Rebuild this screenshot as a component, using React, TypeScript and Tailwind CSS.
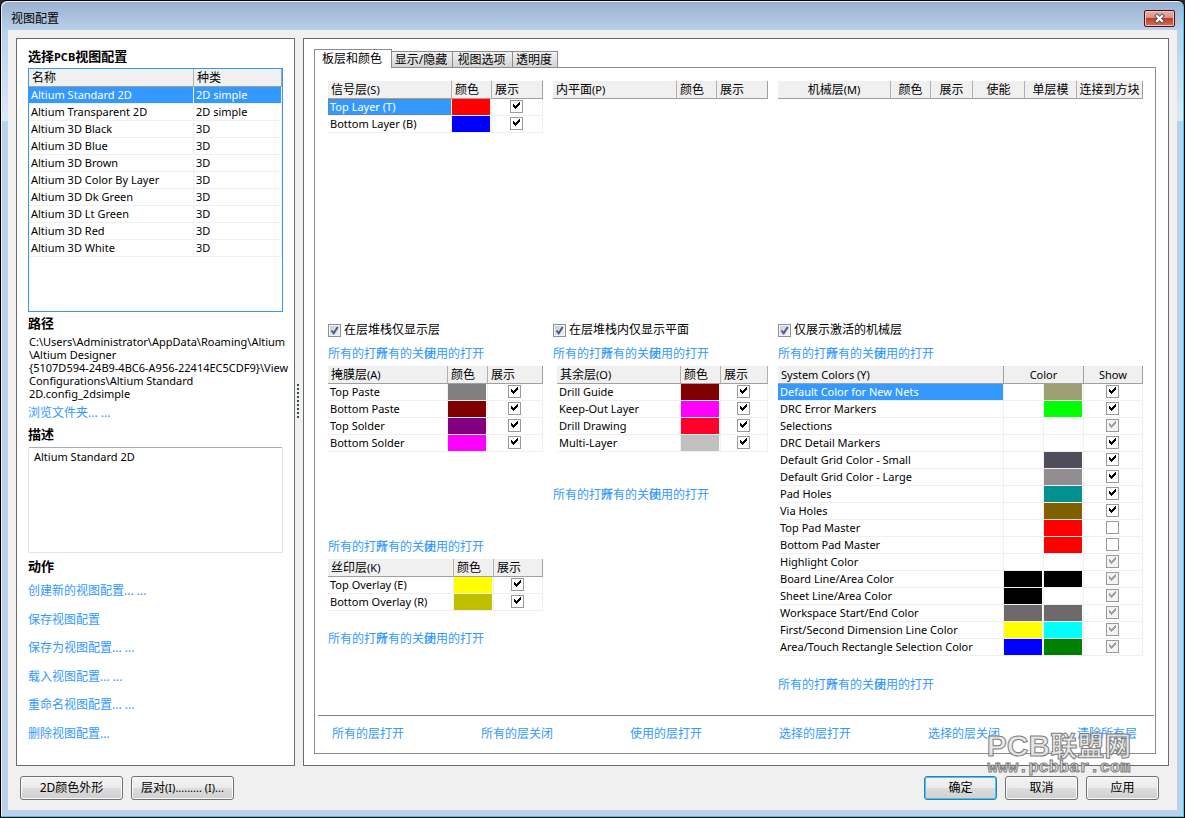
import React from 'react'

interface LayerRow {
  name: string
  color: string
}

interface SystemRow {
  name: string
  first?: string
  second?: string
  state: 'on' | 'off' | 'locked'
}

const CONFIGS = [
  ['Altium Standard 2D', '2D simple'],
  ['Altium Transparent 2D', '2D simple'],
  ['Altium 3D Black', '3D'],
  ['Altium 3D Blue', '3D'],
  ['Altium 3D Brown', '3D'],
  ['Altium 3D Color By Layer', '3D'],
  ['Altium 3D Dk Green', '3D'],
  ['Altium 3D Lt Green', '3D'],
  ['Altium 3D Red', '3D'],
  ['Altium 3D White', '3D'],
]

const ACTIONS = [
  '创建新的视图配置... ...',
  '保存视图配置',
  '保存为视图配置... ...',
  '载入视图配置... ...',
  '重命名视图配置... ...',
  '删除视图配置...',
]

const SIGNAL: LayerRow[] = [
  { name: 'Top Layer (T)', color: 'bg-[#ff0000]' },
  { name: 'Bottom Layer (B)', color: 'bg-[#0000ff]' },
]

const MASK: LayerRow[] = [
  { name: 'Top Paste', color: 'bg-[#808080]' },
  { name: 'Bottom Paste', color: 'bg-[#800000]' },
  { name: 'Top Solder', color: 'bg-[#800080]' },
  { name: 'Bottom Solder', color: 'bg-[#ff00ff]' },
]

const OTHER: LayerRow[] = [
  { name: 'Drill Guide', color: 'bg-[#800000]' },
  { name: 'Keep-Out Layer', color: 'bg-[#ff00ff]' },
  { name: 'Drill Drawing', color: 'bg-[#ff002a]' },
  { name: 'Multi-Layer', color: 'bg-[#c0c0c0]' },
]

const SILK: LayerRow[] = [
  { name: 'Top Overlay (E)', color: 'bg-[#ffff00]' },
  { name: 'Bottom Overlay (R)', color: 'bg-[#c0c000]' },
]

const SYSTEM: SystemRow[] = [
  { name: 'Default Color for New Nets', second: 'bg-[#9f9f76]', state: 'on' },
  { name: 'DRC Error Markers', second: 'bg-[#00ff00]', state: 'on' },
  { name: 'Selections', second: 'bg-white', state: 'locked' },
  { name: 'DRC Detail Markers', second: 'bg-white', state: 'on' },
  { name: 'Default Grid Color - Small', second: 'bg-[#4d4d5c]', state: 'on' },
  { name: 'Default Grid Color - Large', second: 'bg-[#918d90]', state: 'on' },
  { name: 'Pad Holes', second: 'bg-[#009190]', state: 'on' },
  { name: 'Via Holes', second: 'bg-[#7f6000]', state: 'on' },
  { name: 'Top Pad Master', second: 'bg-[#ff0000]', state: 'off' },
  { name: 'Bottom Pad Master', second: 'bg-[#ff0000]', state: 'off' },
  { name: 'Highlight Color', second: 'bg-white', state: 'locked' },
  { name: 'Board Line/Area Color', first: 'bg-black', second: 'bg-black', state: 'locked' },
  { name: 'Sheet Line/Area Color', first: 'bg-black', second: 'bg-white', state: 'locked' },
  { name: 'Workspace Start/End Color', first: 'bg-[#6e6a69]', second: 'bg-[#6e6a69]', state: 'locked' },
  { name: 'First/Second Dimension Line Color', first: 'bg-[#ffff00]', second: 'bg-[#00ffff]', state: 'locked' },
  { name: 'Area/Touch Rectangle Selection Color', first: 'bg-[#0000ff]', second: 'bg-[#008000]', state: 'locked' },
]

const ALL_LAYERS = ['所有的层打开', '所有的层关闭', '使用的层打开', '选择的层打开', '选择的层关闭', '清除所有层']

function Link({ children }: { children: React.ReactNode }) {
  return (
    <a href="#" className="block h-4 whitespace-nowrap text-xs leading-4 text-[#3399ff]">
      {children}
    </a>
  )
}

// Slots are narrower than the labels, so neighbours run into each other
function LayerLinks() {
  return (
    <div className="flex">
      {['所有的打开', '所有的关闭', '使用的打开'].map(t => (
        <div key={t} className="w-12 shrink-0"><Link>{t}</Link></div>
      ))}
    </div>
  )
}

function GridCheck({ label, checked = true, disabled = false }: { label: string; checked?: boolean; disabled?: boolean }) {
  return (
    <span className="relative mx-auto block size-[13px]">
      <input
        type="checkbox"
        aria-label={label}
        defaultChecked={checked}
        disabled={disabled}
        className={`peer block size-[13px] appearance-none border border-[#999999] ${disabled ? 'bg-[#f3f3f3]' : 'bg-white'}`}
      />
      <svg
        viewBox="0 0 13 13"
        shapeRendering="crispEdges"
        className={`pointer-events-none absolute inset-0 hidden size-[13px] peer-checked:block ${disabled ? 'text-[#a0a0a0]' : 'text-black'}`}
      >
        <path
          fill="currentColor"
          d="M3 4h1v3h-1z M4 5h1v3h-1z M5 6h1v3h-1z M6 5h1v3h-1z M7 4h1v3h-1z M8 3h1v3h-1z M9 2h1v3h-1z"
        />
      </svg>
    </span>
  )
}

function OptionCheck({ id, children }: { id: string; children: React.ReactNode }) {
  return (
    <div className="flex h-4 items-center gap-[3px]">
      <span className="relative block size-[13px] shrink-0">
        <input
          id={id}
          type="checkbox"
          defaultChecked
          className="peer block size-[13px] appearance-none border border-[#8e8f8f] bg-linear-to-br from-[#c3c9d2] to-[#f6f6f6] shadow-[inset_0_0_0_1px_#f4f4f4]"
        />
        <svg viewBox="0 0 13 13" className="pointer-events-none absolute inset-0 hidden size-[13px] peer-checked:block">
          <path d="M3.5 6.5L5.7 9.3L9.7 3" fill="none" stroke="#42578f" strokeWidth="1.9" />
        </svg>
      </span>
      <label htmlFor={id} className="whitespace-nowrap text-xs leading-4">{children}</label>
    </div>
  )
}

function Title({ text, hotkey }: { text: string; hotkey: string }) {
  return <>{text}<span className="text-[11px]">({hotkey})</span></>
}

function Head({ children, last = false, center = false, span = 1 }: {
  children: React.ReactNode
  last?: boolean
  center?: boolean
  span?: number
}) {
  return (
    <th
      colSpan={span}
      className={`h-[18px] overflow-hidden whitespace-nowrap border-b border-r border-b-[#a0a0a0] bg-[#f0f0f0] p-0 text-xs leading-4 font-normal ${
        last ? 'border-r-[#a0a0a0]' : 'border-r-[#b0b0b0]'
      } ${center ? 'text-center' : 'pl-[3px] text-left'}`}
    >
      {children}
    </th>
  )
}

const CELL = 'h-[17px] overflow-hidden whitespace-nowrap border-b border-r border-[#f0f0f0] p-0 text-[11px] leading-4'
const CHECK_CELL = 'h-[17px] border-b border-r border-[#f0f0f0] p-0 pt-px pr-[2px] align-top'

function Swatch({ color }: { color?: string }) {
  return (
    <td className={CELL}>
      <div className={`mr-px h-4 ${color ?? ''}`} />
    </td>
  )
}

function LayerTable({ title, hotkey, rows, showCol, selected, openEnd = false }: {
  title: string
  hotkey: string
  rows: LayerRow[]
  showCol: string
  selected?: string
  openEnd?: boolean
}) {
  return (
    <table className="w-full table-fixed border-separate border-spacing-0">
      <colgroup>
        <col />
        <col className="w-10" />
        <col className={showCol} />
      </colgroup>
      <thead>
        <tr>
          <Head><Title text={title} hotkey={hotkey} /></Head>
          <Head>颜色</Head>
          <Head last={!openEnd}>展示</Head>
        </tr>
      </thead>
      <tbody>
        {rows.map(row => (
          <tr key={row.name}>
            <td className={CELL}>
              <div
                className={`h-4 pl-[2px] ${
                  row.name === selected ? 'bg-[#3399ff] text-white outline-1 -outline-offset-1 outline-dotted outline-[#cc6600]/70' : ''
                }`}
              >
                {row.name}
              </div>
            </td>
            <Swatch color={row.color} />
            <td className={CHECK_CELL}><GridCheck label={row.name} /></td>
          </tr>
        ))}
      </tbody>
    </table>
  )
}

function MechanicalTable() {
  return (
    <table className="w-full table-fixed border-separate border-spacing-0">
      <colgroup>
        <col />
        <col className="w-10" />
        <col className="w-[42px]" />
        <col className="w-[52px]" />
        <col className="w-[52px]" />
        <col className="w-[66px]" />
      </colgroup>
      <thead>
        <tr>
          <Head center><Title text="机械层" hotkey="M" /></Head>
          <Head center>颜色</Head>
          <Head center>展示</Head>
          <Head center>使能</Head>
          <Head center>单层模</Head>
          <Head center last>连接到方块</Head>
        </tr>
      </thead>
    </table>
  )
}

function SystemTable() {
  return (
    <table className="w-full table-fixed border-separate border-spacing-0">
      <colgroup>
        <col />
        <col className="w-10" />
        <col className="w-10" />
        <col className="w-[59px]" />
      </colgroup>
      <thead>
        <tr>
          <Head last><span className="text-[11px]">System Colors (Y)</span></Head>
          <Head last center span={2}><span className="text-[11px]">Color</span></Head>
          <Head last center><span className="text-[11px]">Show</span></Head>
        </tr>
      </thead>
      <tbody>
        {SYSTEM.map((row, i) => (
          <tr key={row.name}>
            <td className={CELL}>
              <div className={`h-4 pl-[2px] ${i === 0 ? 'bg-[#3399ff] text-white' : ''}`}>{row.name}</div>
            </td>
            <Swatch color={row.first} />
            <Swatch color={row.second} />
            <td className={CHECK_CELL}>
              <GridCheck label={row.name} checked={row.state !== 'off'} disabled={row.state === 'locked'} />
            </td>
          </tr>
        ))}
      </tbody>
    </table>
  )
}

function PushButton({ children, wide = false, primary = false }: {
  children: React.ReactNode
  wide?: boolean
  primary?: boolean
}) {
  return (
    <button
      type="button"
      className={`h-6 rounded-[3px] border bg-[linear-gradient(#f3f3f3,#ebebeb_50%,#dddddd_50%,#cfcfcf)] text-xs leading-4 ${
        wide ? 'w-[103px]' : 'w-[73px]'
      } ${
        primary
          ? 'border-[#2f7fb5] shadow-[inset_0_0_0_1px_#42c7f2]'
          : 'border-[#707070] shadow-[inset_0_0_0_1px_#fbfbfb]'
      }`}
    >
      {children}
    </button>
  )
}

function Heading({ children }: { children: React.ReactNode }) {
  return <h2 className="h-[18px] whitespace-nowrap text-[13px] leading-[18px] font-bold">{children}</h2>
}

function ConfigPanel() {
  return (
    <aside className="flex w-[279px] shrink-0 flex-col border border-[#6b6b6b] bg-white px-[11px] pt-2 pb-[23px]">
      <Heading>选择<span className="text-[11px]">PCB</span>视图配置</Heading>
      <div className="mt-[3px] h-[244px] border border-[#3399ff]">
        <table className="w-full table-fixed border-separate border-spacing-0">
          <colgroup>
            <col className="w-[165px]" />
            <col />
          </colgroup>
          <thead>
            <tr>
              <Head>名称</Head>
              <Head last>种类</Head>
            </tr>
          </thead>
          <tbody>
            {CONFIGS.map(([name, kind], i) => (
              <tr key={name} className={i === 0 ? 'bg-[#3399ff] text-white' : ''}>
                <td className={`${CELL} pl-[2px]`}>{name}</td>
                <td className={`${CELL} pl-[2px]`}>{kind}</td>
              </tr>
            ))}
          </tbody>
        </table>
      </div>

      <div className="mt-[2px]"><Heading>路径</Heading></div>
      <p className="mt-[3px] pl-px text-[11px] leading-[13px] whitespace-nowrap">
        C:\Users\Administrator\AppData\Roaming\Altium<br />
        \Altium Designer<br />
        {'{5107D594-24B9-4BC6-A956-22414EC5CDF9}\\View'}<br />
        Configurations\Altium Standard<br />
        2D.config_2dsimple
      </p>
      <div className="mt-[5px]"><Link>浏览文件夹... ...</Link></div>

      <div className="mt-1"><Heading><label htmlFor="description">描述</label></Heading></div>
      <textarea
        id="description"
        defaultValue="Altium Standard 2D"
        className="mt-1 block h-[106px] w-full resize-none rounded-[2px] border border-[#e2e3ea] border-t-[#abadb3] px-[5px] py-px text-[11px] leading-4"
      />

      <div className="mt-1"><Heading>动作</Heading></div>
      <nav className="mt-2 flex flex-1 flex-col justify-between">
        {ACTIONS.map(a => <Link key={a}>{a}</Link>)}
      </nav>
    </aside>
  )
}

function Splitter() {
  return (
    <div className="flex w-2 shrink-0 flex-col items-start justify-center gap-[2px] pb-[2px] pl-[2px]">
      {Array.from({ length: 9 }, (_, i) => (
        <div key={i} className="size-[2px] bg-[#2f4f4f]" />
      ))}
    </div>
  )
}

function Tabs() {
  return (
    <div role="tablist" className="flex items-end pr-3 text-xs leading-4">
      <button role="tab" aria-selected className="relative z-10 -mb-px h-[19px] w-[78px] border border-b-0 border-[#898c95] bg-white pr-[2px]">
        板层和颜色
      </button>
      {[
        ['显示/隐藏', 'w-[61px]'],
        ['视图选项', 'w-[60px]'],
        ['透明度', 'w-[45px]'],
      ].map(([t, w]) => (
        <button
          key={t}
          role="tab"
          className={`h-4 border border-b-0 border-l-0 border-[#898c95] bg-linear-to-b from-[#f2f2f2] to-[#d4d4d4] pr-[2px] whitespace-nowrap leading-[14px] ${w}`}
        >
          {t}
        </button>
      ))}
    </div>
  )
}

function Watermark() {
  return (
    <div className="pointer-events-none absolute right-[52px] bottom-[40px] w-[146px] text-center font-bold text-[#e2e4e4] opacity-85 [-webkit-text-stroke:1px_#6a6a6a]">
      <div className="flex h-[27px] items-center justify-center whitespace-nowrap">
        <span className="font-['Liberation_Sans',sans-serif] text-[30px] leading-[30px]">PCB</span>
        <span className="text-[27px] leading-[30px]">联盟网</span>
      </div>
      <div className="flex h-[18px] justify-center font-['Liberation_Mono',monospace] text-[17px] leading-[18px]">www.pcbbar.com</div>
    </div>
  )
}

export default function App() {
  return (
    <div className="bg-[#2b2b2b] font-['Noto_Sans','Noto_Sans_CJK_SC',sans-serif] text-black">
      <div className="relative flex min-h-screen flex-col rounded-t-[7px] border border-black bg-[linear-gradient(#98b1d0,#b9d1ea_30px,#dde8f5_120px,#b9d1ea_120px)] px-[7px] pb-[7px] shadow-[inset_-1px_-1px_0_#2fd0ee,inset_1px_1px_0_#e8f1fa]">
        <header className="flex h-[29px] shrink-0 items-center justify-between pt-[6px] pr-[2px] pl-[3px] text-xs leading-4">
          <h1>视图配置</h1>
          <button
            type="button"
            aria-label="关闭"
            className="flex h-[17px] w-[31px] items-center justify-center rounded-[2px] border border-[#4a1020] bg-[linear-gradient(#e8b0a6,#dc8f82_45%,#bf3d22_50%,#d5705c)] shadow-[inset_0_0_0_1px_#efc2ba]"
          >
            <svg viewBox="0 0 13 11" className="h-[11px] w-[13px]">
              <path d="M4 3L9 8M9 3L4 8" stroke="#4b5563" strokeWidth="4" strokeLinecap="square" />
              <path d="M4 3L9 8M9 3L4 8" stroke="#ffffff" strokeWidth="2.2" strokeLinecap="square" />
            </svg>
          </button>
        </header>

        <main className="flex flex-1 flex-col bg-[#f0f0f0] pt-2 pb-[10px]">
          <div className="flex flex-1 px-2">
            <ConfigPanel />
            <Splitter />
            <section className="flex min-w-0 flex-1 flex-col border border-[#6b6b6b] bg-white pt-[10px] pr-3 pb-[11px] pl-[10px]">
              <Tabs />
              <div className="flex flex-1 flex-col border border-[#898c95]">
                <div className="grid flex-1 grid-cols-[215fr_215fr_365fr] gap-[10px] pt-[13px] pr-3 pl-[13px]">
                  <div>
                    <div className="h-[241px]">
                      <LayerTable title="信号层" hotkey="S" rows={SIGNAL} showCol="w-[51px]" selected="Top Layer (T)" />
                    </div>
                    <OptionCheck id="stack-layers">在层堆栈仅显示层</OptionCheck>
                    <div className="mt-2 mb-1"><LayerLinks /></div>
                    <LayerTable title="掩膜层" hotkey="A" rows={MASK} showCol="w-[55px]" />
                    <div className="mt-[87px] mb-1"><LayerLinks /></div>
                    <LayerTable title="丝印层" hotkey="K" rows={SILK} showCol="w-[49px]" />
                    <div className="mt-5"><LayerLinks /></div>
                  </div>
                  <div>
                    <div className="h-[241px]">
                      <LayerTable title="内平面" hotkey="P" rows={[]} showCol="w-[51px]" />
                    </div>
                    <OptionCheck id="stack-planes">在层堆栈内仅显示平面</OptionCheck>
                    <div className="mt-2 mb-1"><LayerLinks /></div>
                    <div className="pl-1">
                      <LayerTable title="其余层" hotkey="O" rows={OTHER} showCol="w-[47px]" openEnd />
                    </div>
                    <div className="mt-[35px]"><LayerLinks /></div>
                  </div>
                  <div>
                    <div className="h-[241px]"><MechanicalTable /></div>
                    <OptionCheck id="active-mechanical">仅展示激活的机械层</OptionCheck>
                    <div className="mt-2 mb-1"><LayerLinks /></div>
                    <SystemTable />
                    <div className="mt-[21px]"><LayerLinks /></div>
                  </div>
                </div>
                <div className="mr-px ml-[3px] border-t border-[#808080]" />
                <div className="flex h-[37px] items-center justify-between pr-[18px] pb-[2px] pl-[17px]">
                  {ALL_LAYERS.map(t => <Link key={t}>{t}</Link>)}
                </div>
              </div>
            </section>
          </div>

          <footer className="mt-[10px] flex gap-2 pr-[18px] pl-3">
            <PushButton wide>2D颜色外形</PushButton>
            <PushButton wide>层对<span className="text-[11px]">(I)......... (I)...</span></PushButton>
            <div className="ml-auto flex gap-2">
              <PushButton primary>确定</PushButton>
              <PushButton>取消</PushButton>
              <PushButton>应用</PushButton>
            </div>
          </footer>
        </main>
        <Watermark />
      </div>
    </div>
  )
}
